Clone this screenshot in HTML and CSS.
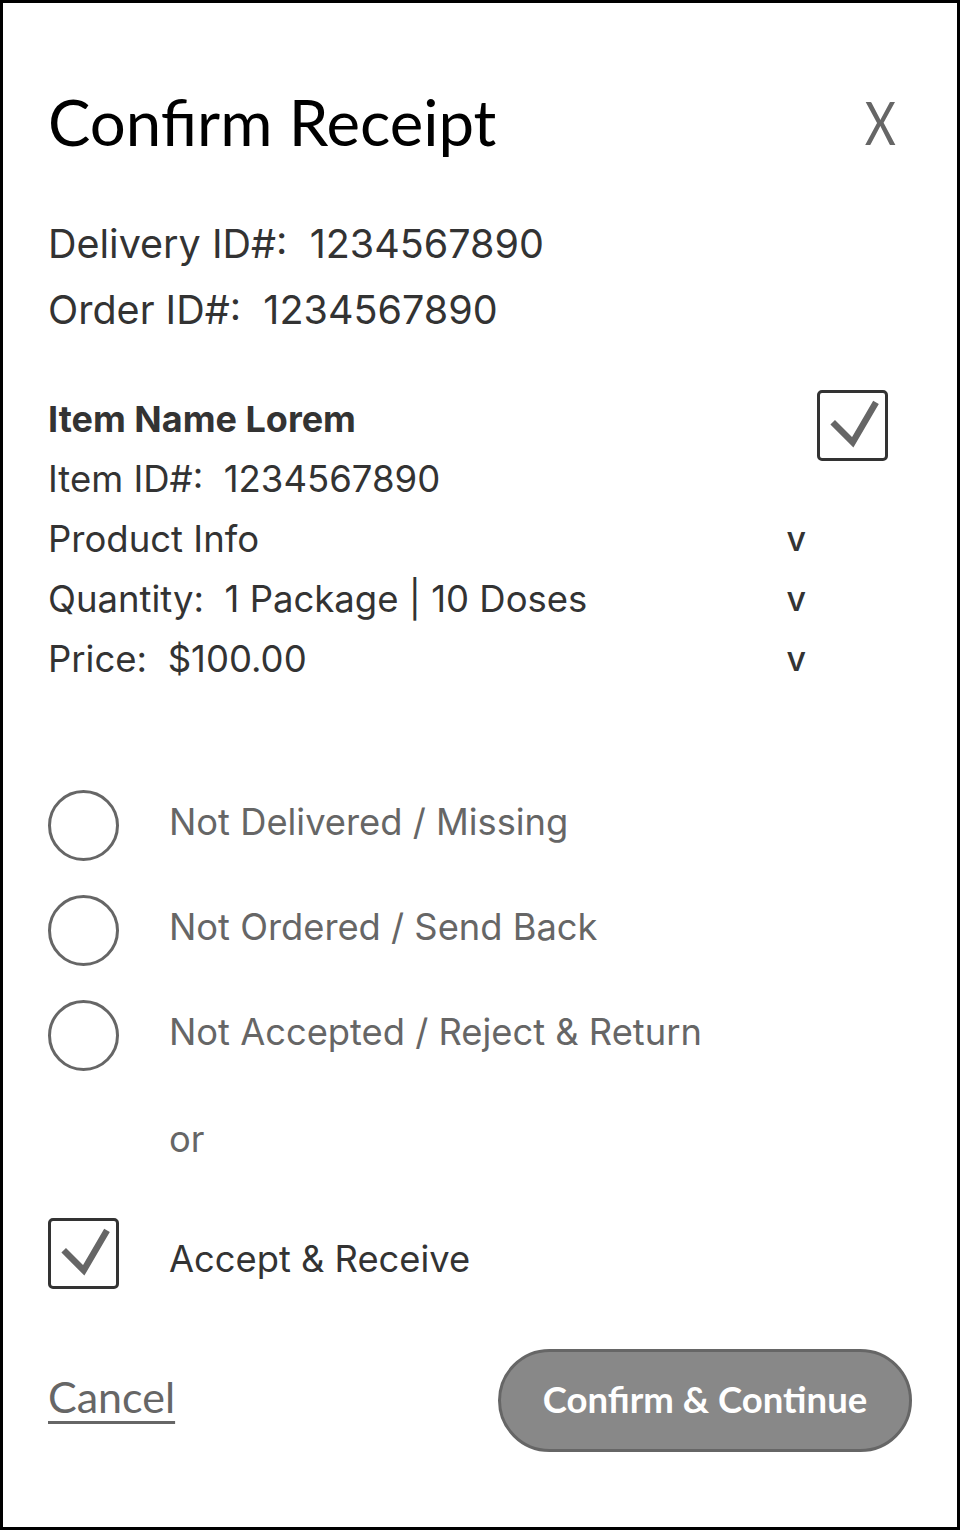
FILE: index.html
```html
<!DOCTYPE html>
<html>
<head>
<meta charset="utf-8">
<link rel="stylesheet" href="styles.css">
</head>
<body>
<div class="frame">
  <header class="head">
    <h1 class="title">Confirm Receipt</h1>
    <span class="close">X</span>
  </header>

  <section class="ids">
    <p class="id-line">Delivery ID#:&nbsp; 1234567890</p>
    <p class="id-line">Order ID#:&nbsp; 1234567890</p>
  </section>

  <section class="item">
    <div class="item-info">
      <p class="row bold">Item Name Lorem</p>
      <p class="row">Item ID#:&nbsp; 1234567890</p>
      <p class="row"><span>Product Info</span><span class="chev">v</span></p>
      <p class="row"><span>Quantity:&nbsp; 1 Package | 10 Doses</span><span class="chev">v</span></p>
      <p class="row"><span>Price:&nbsp; $100.00</span><span class="chev">v</span></p>
    </div>
    <div class="box item-check">
      <svg viewBox="0 0 65 65" width="65" height="65"><path d="M12.7 29.3 L32.7 49.3 L56 9.3" fill="none" stroke="#666" stroke-width="6.5"/></svg>
    </div>
  </section>

  <section class="options">
    <div class="opt"><span class="radio"></span><span class="opt-label">Not Delivered / Missing</span></div>
    <div class="opt"><span class="radio"></span><span class="opt-label">Not Ordered / Send Back</span></div>
    <div class="opt"><span class="radio"></span><span class="opt-label">Not Accepted / Reject &amp; Return</span></div>
    <div class="or">or</div>
    <div class="opt accept">
      <span class="box">
        <svg viewBox="0 0 65 65" width="65" height="65"><path d="M12.7 29.3 L32.7 49.3 L56 9.3" fill="none" stroke="#666" stroke-width="6.5"/></svg>
      </span>
      <span class="opt-label dark">Accept &amp; Receive</span>
    </div>
  </section>

  <footer class="actions">
    <a class="cancel">Cancel</a>
    <button class="confirm">Confirm &amp; Continue</button>
  </footer>
</div>
</body>
</html>
```
FILE: styles.css
```css
* { box-sizing: border-box; }
html, body { margin: 0; padding: 0; background: #fff; }
.frame {
  width: 960px;
  height: 1530px;
  border: 3px solid #000;
  padding: 0 45px;
  font-family: Inter, "Noto Sans", sans-serif;
  color: #333;
  display: flex;
  flex-direction: column;
}
p { margin: 0; }
.head {
  display: flex;
  justify-content: space-between;
  align-items: center;
  margin-top: 83px;
  height: 72px;
}
.title {
  margin: 0;
  font-family: Lato, sans-serif;
  font-weight: 400;
  font-size: 63.5px;
  color: #000;
  line-height: 72px;
}
.close {
  font-family: Lato, sans-serif;
  font-size: 60px;
  line-height: 72px;
  color: #666;
  font-weight: 400;
  margin-right: 16px;
  transform: scaleX(0.8);
  transform-origin: right center;
}
.ids { margin-top: 53px; }
.id-line { font-size: 39.5px; line-height: 66px; height: 66px; }
.item {
  margin-top: 46px;
  display: flex;
  justify-content: space-between;
  align-items: flex-start;
}
.item-info { width: 760px; }
.row {
  font-size: 36.5px;
  line-height: 60px;
  height: 60px;
  display: flex;
  justify-content: space-between;
}
.bold { font-weight: 700; font-size: 36px; }
.chev { font-weight: 500; font-size: 34px; margin-right: 2px; }
.box {
  width: 71px; height: 71px;
  border: 3px solid #333;
  border-radius: 5px;
  display: flex;
  align-items: center;
  justify-content: center;
  flex: none;
}
.box svg { display: block; }
.item-check { margin-top: 1px; margin-right: 24px; }
.options { margin-top: 101px; }
.opt {
  display: flex;
  align-items: center;
  height: 71px;
  margin-bottom: 34px;
}
.radio {
  width: 71px; height: 71px;
  border: 3px solid #666;
  border-radius: 50%;
  flex: none;
}
.opt-label {
  margin-left: 50px;
  font-size: 36.3px;
  color: #666;
  margin-bottom: 8px;
}
.opt-label.dark { color: #333; margin-bottom: 0; margin-top: 10px; }
.or {
  margin-left: 121px;
  font-size: 36.3px;
  color: #666;
  line-height: 40px;
  margin-top: 48px;
  margin-bottom: 59px;
}
.actions {
  margin-top: 26px;
  display: flex;
  justify-content: space-between;
  align-items: center;
}
.cancel {
  font-family: Lato, sans-serif;
  font-size: 43px;
  color: #666;
  text-decoration: underline;
  text-decoration-thickness: 3px;
  text-underline-offset: 8px;
  margin-top: -8px;
}
.confirm {
  width: 414px;
  height: 103px;
  margin-right: 0;
  border-radius: 52px;
  background: #888;
  border: 3px solid #666;
  color: #fff;
  font-family: Lato, sans-serif;
  font-weight: 700;
  font-size: 36.5px;
  padding-bottom: 4px;
}
```
